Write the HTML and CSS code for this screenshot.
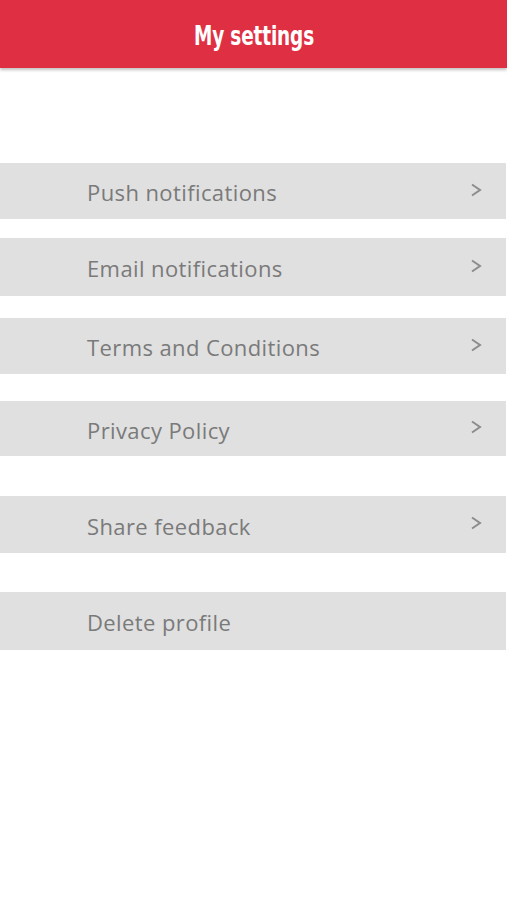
FILE: index.html
```html
<!DOCTYPE html>
<html>
<head>
<meta charset="utf-8">
<link rel="stylesheet" href="styles.css">
</head>
<body>
<header class="topbar"><h1 class="title">My settings</h1></header>
<main class="list">
  <div class="row r1"><span class="label">Push notifications</span><svg class="chev" viewBox="0 0 12 14"><path d="M2 1.5 L10 7 L2 12.5" fill="none" stroke="#8c8c8c" stroke-width="2"/></svg></div>
  <div class="row r2"><span class="label">Email notifications</span><svg class="chev" viewBox="0 0 12 14"><path d="M2 1.5 L10 7 L2 12.5" fill="none" stroke="#8c8c8c" stroke-width="2"/></svg></div>
  <div class="row r3"><span class="label">Terms and Conditions</span><svg class="chev" viewBox="0 0 12 14"><path d="M2 1.5 L10 7 L2 12.5" fill="none" stroke="#8c8c8c" stroke-width="2"/></svg></div>
  <div class="row r4"><span class="label">Privacy Policy</span><svg class="chev" viewBox="0 0 12 14"><path d="M2 1.5 L10 7 L2 12.5" fill="none" stroke="#8c8c8c" stroke-width="2"/></svg></div>
  <div class="row r5"><span class="label">Share feedback</span><svg class="chev" viewBox="0 0 12 14"><path d="M2 1.5 L10 7 L2 12.5" fill="none" stroke="#8c8c8c" stroke-width="2"/></svg></div>
  <div class="row r6 tall"><span class="label">Delete profile</span></div>
</main>
</body>
</html>
```
FILE: styles.css
```css
html, body { margin: 0; padding: 0; background: #fff; }
body { width: 507px; height: 900px; overflow: hidden; font-family: "Open Sans", "Liberation Sans", sans-serif; }
.topbar {
  height: 68px;
  background: #df3043;
  display: flex;
  align-items: center;
  justify-content: center;
  box-shadow: 0 2px 3px rgba(0,0,0,0.25);
  position: relative;
}
.title {
  margin: 0;
  color: #fff;
  font-family: "Liberation Sans Narrow", "DejaVu Sans Condensed", sans-serif;
  font-weight: bold;
  font-size: 26px;
  letter-spacing: -0.2px;
  transform: scaleX(0.79);
  padding-top: 4px;
}
.list { display: flex; flex-direction: column; width: 506px; }
.row {
  height: 56px;
  background: #e0e0e0;
  display: flex;
  align-items: center;
  justify-content: space-between;
  padding: 0 24px 0 87px;
}
.label { color: #7a7a7a; font-size: 22px; letter-spacing: 0.4px; padding-top: 2px; }
.chev { width: 12px; height: 14px; margin-top: -3px; }
.r1 { margin-top: 95px; }
.r2 { margin-top: 19px; height: 58px; }
.r3 { margin-top: 22px; }
.r4 { margin-top: 27px; height: 55px; }
.r5 { margin-top: 40px; height: 57px; }
.r6 { margin-top: 39px; }
.tall { height: 58px; }
```
